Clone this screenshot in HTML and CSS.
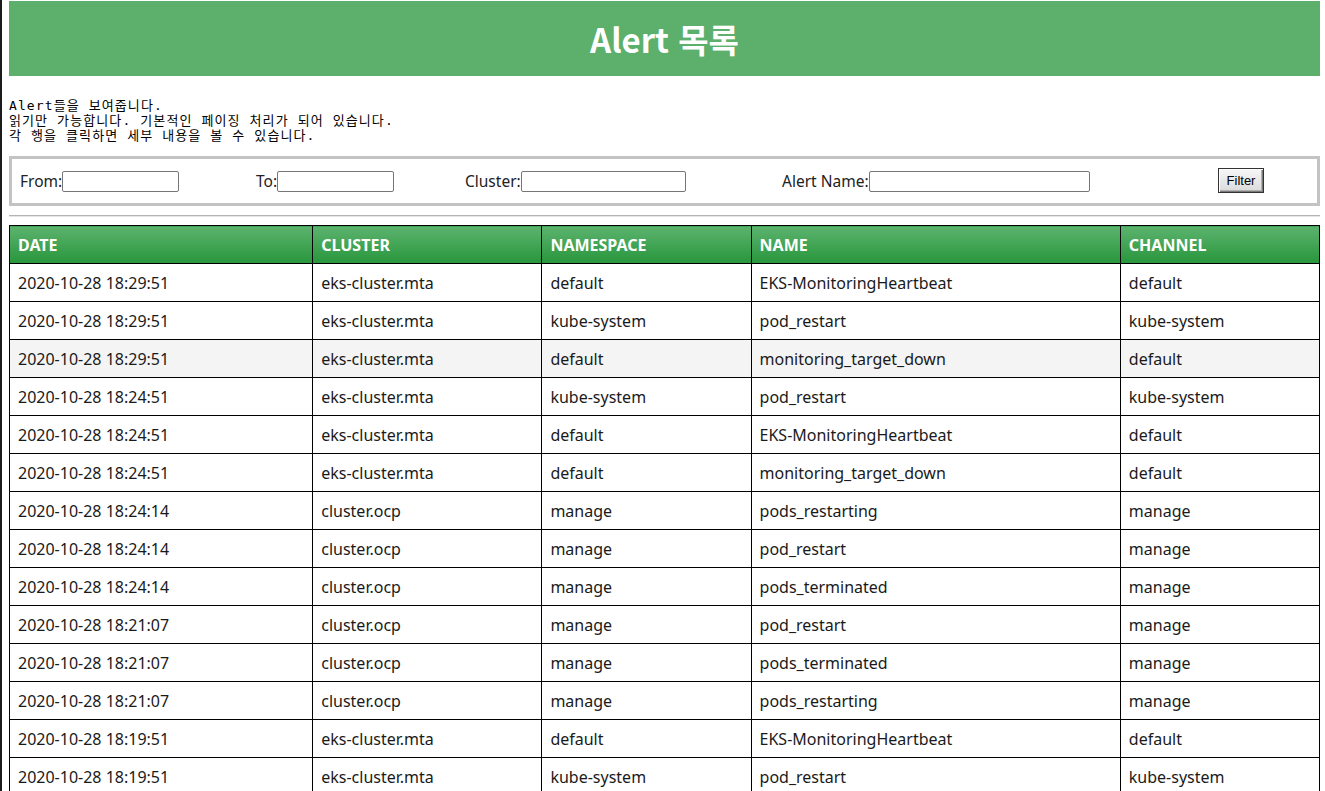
FILE: index.html
```html
<!DOCTYPE html>
<html lang="ko">
<head>
<meta charset="utf-8">
<title>Alert 목록</title>
<link rel="stylesheet" href="styles.css">
</head>
<body>
<div class="edge"></div>
<div class="page">
  <header class="banner"><h1 class="title">Alert 목록</h1></header>
  <pre class="desc">Alert들을 보여줍니다.
읽기만 가능합니다. 기본적인 페이징 처리가 되어 있습니다.
각 행을 클릭하면 세부 내용을 볼 수 있습니다.</pre>
  <form class="filter">
    <div class="fcell c1"><label>From:</label><input class="in w117" type="text"></div>
    <div class="fcell c2"><label>To:</label><input class="in w117" type="text"></div>
    <div class="fcell c3"><label>Cluster:</label><input class="in w165" type="text"></div>
    <div class="fcell c4"><label>Alert Name:</label><input class="in w221" type="text"></div>
    <div class="fcell c5"><button class="btn" type="button">Filter</button></div>
  </form>
  <div class="rule"></div>
  <table class="grid">
    <colgroup>
      <col class="k1"><col class="k2"><col class="k3"><col class="k4"><col class="k5">
    </colgroup>
    <thead>
      <tr><th>DATE</th><th>CLUSTER</th><th>NAMESPACE</th><th>NAME</th><th>CHANNEL</th></tr>
    </thead>
    <tbody>
      <tr><td>2020-10-28 18:29:51</td><td>eks-cluster.mta</td><td>default</td><td>EKS-MonitoringHeartbeat</td><td>default</td></tr>
      <tr><td>2020-10-28 18:29:51</td><td>eks-cluster.mta</td><td>kube-system</td><td>pod_restart</td><td>kube-system</td></tr>
      <tr class="hover"><td>2020-10-28 18:29:51</td><td>eks-cluster.mta</td><td>default</td><td>monitoring_target_down</td><td>default</td></tr>
      <tr><td>2020-10-28 18:24:51</td><td>eks-cluster.mta</td><td>kube-system</td><td>pod_restart</td><td>kube-system</td></tr>
      <tr><td>2020-10-28 18:24:51</td><td>eks-cluster.mta</td><td>default</td><td>EKS-MonitoringHeartbeat</td><td>default</td></tr>
      <tr><td>2020-10-28 18:24:51</td><td>eks-cluster.mta</td><td>default</td><td>monitoring_target_down</td><td>default</td></tr>
      <tr><td>2020-10-28 18:24:14</td><td>cluster.ocp</td><td>manage</td><td>pods_restarting</td><td>manage</td></tr>
      <tr><td>2020-10-28 18:24:14</td><td>cluster.ocp</td><td>manage</td><td>pod_restart</td><td>manage</td></tr>
      <tr><td>2020-10-28 18:24:14</td><td>cluster.ocp</td><td>manage</td><td>pods_terminated</td><td>manage</td></tr>
      <tr><td>2020-10-28 18:21:07</td><td>cluster.ocp</td><td>manage</td><td>pod_restart</td><td>manage</td></tr>
      <tr><td>2020-10-28 18:21:07</td><td>cluster.ocp</td><td>manage</td><td>pods_terminated</td><td>manage</td></tr>
      <tr><td>2020-10-28 18:21:07</td><td>cluster.ocp</td><td>manage</td><td>pods_restarting</td><td>manage</td></tr>
      <tr><td>2020-10-28 18:19:51</td><td>eks-cluster.mta</td><td>default</td><td>EKS-MonitoringHeartbeat</td><td>default</td></tr>
      <tr><td>2020-10-28 18:19:51</td><td>eks-cluster.mta</td><td>kube-system</td><td>pod_restart</td><td>kube-system</td></tr>
    </tbody>
  </table>
</div>
</body>
</html>
```

FILE: styles.css
```css
html, body {
  margin: 0;
  padding: 0;
  background: #ffffff;
  overflow: hidden;
}
body {
  display: flex;
  font-family: "Noto Sans", "Open Sans", "Noto Sans CJK KR", sans-serif;
  color: #111;
}
.edge {
  flex: 0 0 2px;
  background: #1b1b1b;
  min-height: 100vh;
}
.page {
  flex: 1;
  padding: 1px 7px 0 7px;
}
.banner {
  height: 75px;
  background: #5cb06c;
  display: flex;
  align-items: center;
  justify-content: center;
}
.title {
  margin: 0;
  color: #fff;
  font-family: "Noto Sans CJK KR", "Noto Sans", sans-serif;
  font-weight: 700;
  font-size: 33px;
  line-height: 1;
  padding-top: 1px;
}
.desc {
  margin: 22px 0 0 0;
  font-family: "DejaVu Sans Mono", "Noto Sans CJK KR", monospace;
  font-size: 13px;
  line-height: 15px;
  color: #000;
  letter-spacing: 1.1px;
}
.filter {
  margin: 13px 0 0 0;
  border: 3px solid #c3c3c3;
  height: 44px;
  display: grid;
  grid-template-columns: 236px 209px 317px 436px 1fr;
  align-items: center;
  padding-left: 8px;
}
.fcell {
  display: flex;
  align-items: center;
  color: #222;
}
.fcell label {
  font-family: "Noto Sans", sans-serif;
  font-size: 15.5px;
}
.in {
  height: 21px;
  box-sizing: border-box;
  border: 1px solid #767676;
  border-radius: 2px;
  padding: 0 2px;
  margin: 0;
  background: #fff;
}
.w117 { width: 117px; }
.w165 { width: 165px; }
.w221 { width: 221px; }
.btn {
  width: 46px;
  height: 25px;
  margin-top: -2px;
  box-sizing: border-box;
  font-family: "Liberation Sans", Arial, sans-serif;
  font-size: 13px;
  color: #000;
  padding: 0;
  border: 1px solid #333;
  border-radius: 0;
  background: linear-gradient(#f7f7f7, #dadada);
  box-shadow: inset 1px 1px 0 #ffffff, inset -1px -1px 0 #7a7a7a, inset -2px -2px 0 #b0b0b0;
}
.rule {
  margin-top: 9px;
  height: 0;
  border-top: 1px solid #b4b4b4;
  border-bottom: 1px solid #e6e6e6;
}
.grid {
  margin-top: 8px;
  width: 1311px;
  border-collapse: collapse;
  table-layout: fixed;
  font-size: 16px;
}
.k1 { width: 303px; }
.k2 { width: 229px; }
.k3 { width: 209px; }
.k4 { width: 369px; }
.k5 { width: 199px; }
.grid th, .grid td {
  border: 1px solid #000;
  height: 38px;
  padding: 0 0 0 8px;
  text-align: left;
  box-sizing: border-box;
}
.grid th {
  color: #fff;
  font-weight: 700;
  font-size: 16px;
  background: linear-gradient(#5cb36e, #28963c);
}
.grid td {
  color: #1a1a1a;
}
.grid tr.hover td {
  background: #f4f4f4;
}
```
